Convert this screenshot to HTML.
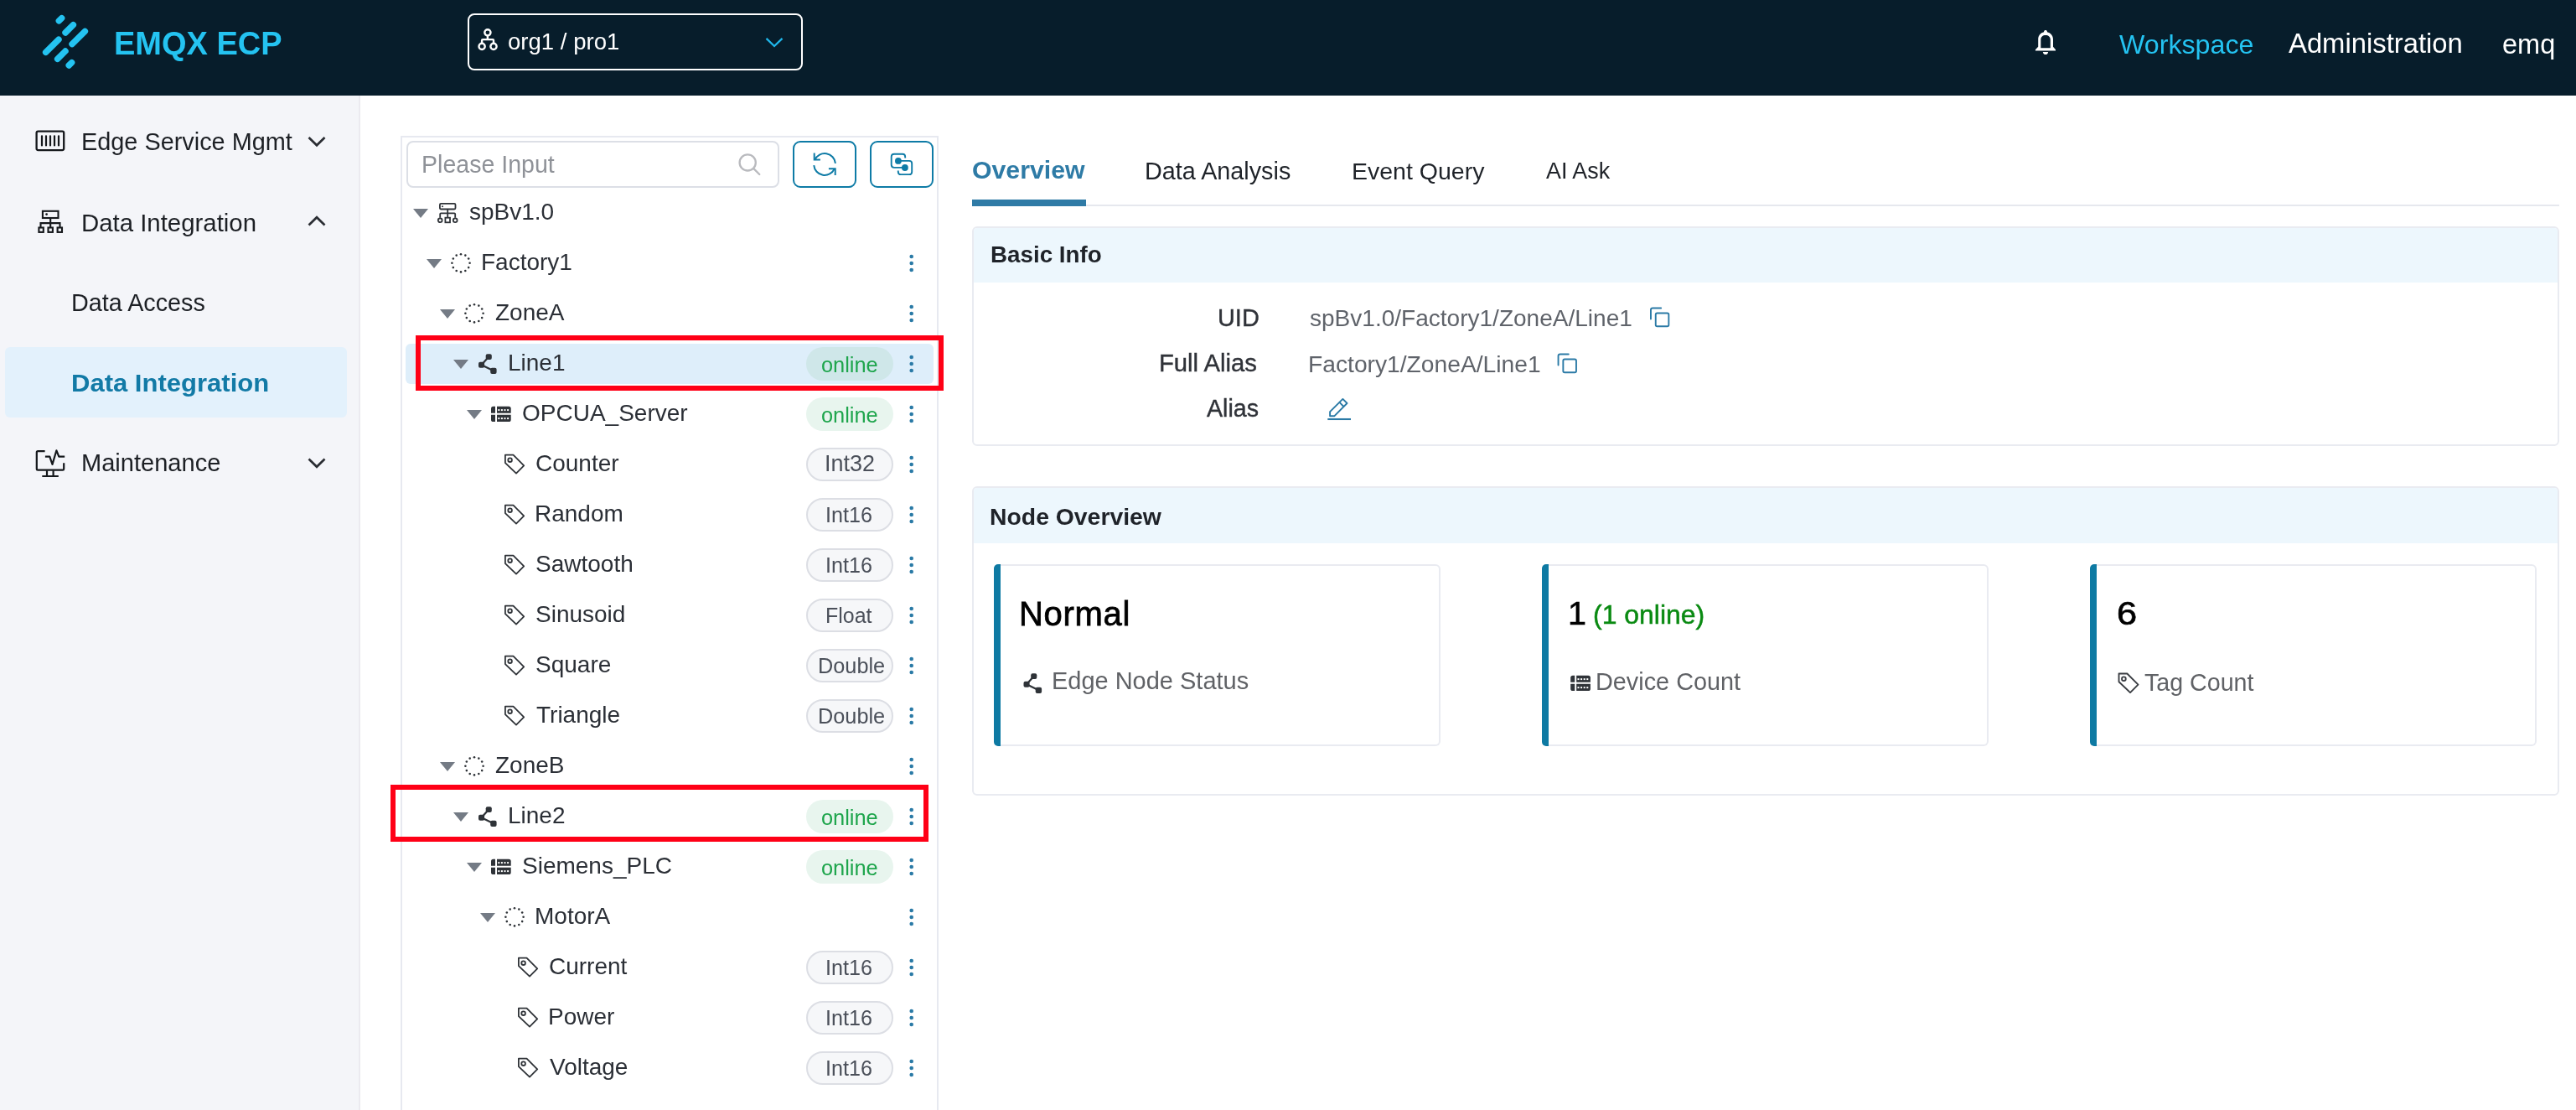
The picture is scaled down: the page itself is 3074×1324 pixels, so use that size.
<!DOCTYPE html>
<html><head><meta charset="utf-8"><title>EMQX ECP</title>
<style>
html,body{margin:0;padding:0;}
body{width:3074px;height:1324px;position:relative;overflow:hidden;background:#fff;font-family:"Liberation Sans", sans-serif;}
.t{position:absolute;line-height:1;white-space:nowrap;will-change:transform;}
.r{position:absolute;}
svg.ov{position:absolute;left:0;top:0;width:3074px;height:1324px;pointer-events:none;}
</style></head><body>
<div class="r" style="left:0px;top:0px;width:3074px;height:114px;background:#071d2b"></div>
<div class="r" style="left:0px;top:114px;width:428px;height:1210px;background:#f4f5f9"></div>
<div class="r" style="left:428px;top:114px;width:2px;height:1210px;background:#ebeaf0"></div>
<div class="t" style="left:136.42px;top:33.03px;font-size:38.0px;color:#24c3f1;font-weight:700;">EMQX ECP</div>
<div class="r" style="left:558px;top:16px;width:400px;height:68px;border:2px solid #fff;border-radius:8px;box-sizing:border-box"></div>
<div class="t" style="left:605.90px;top:36.45px;font-size:27.58px;color:#ffffff;font-weight:400;">org1 / pro1</div>
<div class="t" style="left:2529.00px;top:36.84px;font-size:32.2px;color:#24c3f1;font-weight:400;">Workspace</div>
<div class="t" style="left:2731.00px;top:36.33px;font-size:32.8px;color:#ffffff;font-weight:400;">Administration</div>
<div class="t" style="left:2986.10px;top:36.59px;font-size:32.5px;color:#ffffff;font-weight:400;">emq</div>
<div class="t" style="left:97.19px;top:154.96px;font-size:28.87px;color:#1d2025;font-weight:400;">Edge Service Mgmt</div>
<div class="t" style="left:97.15px;top:250.62px;font-size:29.39px;color:#1d2025;font-weight:400;">Data Integration</div>
<div class="t" style="left:84.70px;top:347.06px;font-size:28.75px;color:#1d2025;font-weight:400;">Data Access</div>
<div class="r" style="left:6px;top:414px;width:408px;height:84px;background:#e3f1fc;border-radius:6px"></div>
<div class="t" style="left:85.14px;top:442.85px;font-size:29px;color:#127aa6;font-weight:700;transform:scaleX(1.0698);transform-origin:0 0;">Data Integration</div>
<div class="t" style="left:97.38px;top:538.40px;font-size:29.06px;color:#1d2025;font-weight:400;">Maintenance</div>
<div class="r" style="left:478px;top:162px;width:642px;height:1200px;border:2px solid #e7e9f0;border-bottom:none;box-sizing:border-box"></div>
<div class="r" style="left:485px;top:168px;width:445px;height:56px;border:2px solid #dcdfe6;border-radius:8px;box-sizing:border-box;background:#fff"></div>
<div class="t" style="left:503.11px;top:181.92px;font-size:28.57px;color:#8f9298;font-weight:400;">Please Input</div>
<div class="r" style="left:946.2px;top:168.2px;width:75.5px;height:55.5px;border:2px solid #0e7ba6;border-radius:9px;box-sizing:border-box"></div>
<div class="r" style="left:1038.2px;top:168.2px;width:75.5px;height:55.5px;border:2px solid #0e7ba6;border-radius:9px;box-sizing:border-box"></div>
<div class="r" style="left:484px;top:410px;width:630px;height:48px;background:#deeefa;border-radius:6px"></div>
<div class="t" style="left:559.64px;top:239.30px;font-size:28px;color:#2b2f36;font-weight:400;">spBv1.0</div>
<div class="t" style="left:573.96px;top:299.30px;font-size:28px;color:#2b2f36;font-weight:400;">Factory1</div>
<div class="t" style="left:591.36px;top:359.30px;font-size:28px;color:#2b2f36;font-weight:400;">ZoneA</div>
<div class="t" style="left:605.96px;top:419.30px;font-size:28px;color:#2b2f36;font-weight:400;">Line1</div>
<div class="r" style="left:962px;top:414px;width:104px;height:40px;background:#cfe7e9;border-radius:20px"></div>
<div class="t" style="left:979.98px;top:422.52px;font-size:25.38px;color:#1ea54c;font-weight:400;">online</div>
<div class="t" style="left:623.08px;top:479.30px;font-size:28px;color:#2b2f36;font-weight:400;">OPCUA_Server</div>
<div class="r" style="left:962px;top:474px;width:104px;height:40px;background:#e8f5ee;border-radius:20px"></div>
<div class="t" style="left:979.98px;top:482.52px;font-size:25.38px;color:#1ea54c;font-weight:400;">online</div>
<div class="t" style="left:638.80px;top:539.30px;font-size:28px;color:#2b2f36;font-weight:400;">Counter</div>
<div class="r" style="left:962px;top:534px;width:104px;height:40px;background:#f6f7f9;border:2px solid #dcdee4;border-radius:20px;box-sizing:border-box"></div>
<div class="t" style="left:983.57px;top:540.18px;font-size:26.96px;color:#4b505a;font-weight:400;">Int32</div>
<div class="t" style="left:637.96px;top:599.30px;font-size:28px;color:#2b2f36;font-weight:400;">Random</div>
<div class="r" style="left:962px;top:594px;width:104px;height:40px;background:#f6f7f9;border:2px solid #dcdee4;border-radius:20px;box-sizing:border-box"></div>
<div class="t" style="left:985.14px;top:601.74px;font-size:25.12px;color:#4b505a;font-weight:400;">Int16</div>
<div class="t" style="left:639.08px;top:659.30px;font-size:28px;color:#2b2f36;font-weight:400;">Sawtooth</div>
<div class="r" style="left:962px;top:654px;width:104px;height:40px;background:#f6f7f9;border:2px solid #dcdee4;border-radius:20px;box-sizing:border-box"></div>
<div class="t" style="left:985.14px;top:661.74px;font-size:25.12px;color:#4b505a;font-weight:400;">Int16</div>
<div class="t" style="left:639.08px;top:719.30px;font-size:28px;color:#2b2f36;font-weight:400;">Sinusoid</div>
<div class="r" style="left:962px;top:714px;width:104px;height:40px;background:#f6f7f9;border:2px solid #dcdee4;border-radius:20px;box-sizing:border-box"></div>
<div class="t" style="left:985.40px;top:721.89px;font-size:24.94px;color:#4b505a;font-weight:400;">Float</div>
<div class="t" style="left:639.08px;top:779.30px;font-size:28px;color:#2b2f36;font-weight:400;">Square</div>
<div class="r" style="left:962px;top:774px;width:104px;height:40px;background:#f6f7f9;border:2px solid #dcdee4;border-radius:20px;box-sizing:border-box"></div>
<div class="t" style="left:976.28px;top:781.59px;font-size:25.29px;color:#4b505a;font-weight:400;">Double</div>
<div class="t" style="left:639.64px;top:839.30px;font-size:28px;color:#2b2f36;font-weight:400;">Triangle</div>
<div class="r" style="left:962px;top:834px;width:104px;height:40px;background:#f6f7f9;border:2px solid #dcdee4;border-radius:20px;box-sizing:border-box"></div>
<div class="t" style="left:976.28px;top:841.59px;font-size:25.29px;color:#4b505a;font-weight:400;">Double</div>
<div class="t" style="left:591.36px;top:899.30px;font-size:28px;color:#2b2f36;font-weight:400;">ZoneB</div>
<div class="t" style="left:605.96px;top:959.30px;font-size:28px;color:#2b2f36;font-weight:400;">Line2</div>
<div class="r" style="left:962px;top:954px;width:104px;height:40px;background:#e8f5ee;border-radius:20px"></div>
<div class="t" style="left:979.98px;top:962.52px;font-size:25.38px;color:#1ea54c;font-weight:400;">online</div>
<div class="t" style="left:623.08px;top:1019.30px;font-size:28px;color:#2b2f36;font-weight:400;">Siemens_PLC</div>
<div class="r" style="left:962px;top:1014px;width:104px;height:40px;background:#e8f5ee;border-radius:20px"></div>
<div class="t" style="left:979.98px;top:1022.52px;font-size:25.38px;color:#1ea54c;font-weight:400;">online</div>
<div class="t" style="left:637.96px;top:1079.30px;font-size:28px;color:#2b2f36;font-weight:400;">MotorA</div>
<div class="t" style="left:654.80px;top:1139.30px;font-size:28px;color:#2b2f36;font-weight:400;">Current</div>
<div class="r" style="left:962px;top:1134px;width:104px;height:40px;background:#f6f7f9;border:2px solid #dcdee4;border-radius:20px;box-sizing:border-box"></div>
<div class="t" style="left:985.14px;top:1141.74px;font-size:25.12px;color:#4b505a;font-weight:400;">Int16</div>
<div class="t" style="left:653.96px;top:1199.30px;font-size:28px;color:#2b2f36;font-weight:400;">Power</div>
<div class="r" style="left:962px;top:1194px;width:104px;height:40px;background:#f6f7f9;border:2px solid #dcdee4;border-radius:20px;box-sizing:border-box"></div>
<div class="t" style="left:985.14px;top:1201.74px;font-size:25.12px;color:#4b505a;font-weight:400;">Int16</div>
<div class="t" style="left:656.20px;top:1259.30px;font-size:28px;color:#2b2f36;font-weight:400;">Voltage</div>
<div class="r" style="left:962px;top:1254px;width:104px;height:40px;background:#f6f7f9;border:2px solid #dcdee4;border-radius:20px;box-sizing:border-box"></div>
<div class="t" style="left:985.14px;top:1261.74px;font-size:25.12px;color:#4b505a;font-weight:400;">Int16</div>
<div class="r" style="left:496px;top:400px;width:630px;height:66px;border:6px solid #ff0016;box-sizing:border-box"></div>
<div class="r" style="left:466px;top:936px;width:642px;height:68px;border:6px solid #ff0016;box-sizing:border-box"></div>
<div class="t" style="left:1159.79px;top:188.39px;font-size:30.25px;color:#2e7ba6;font-weight:700;">Overview</div>
<div class="t" style="left:1365.70px;top:189.65px;font-size:28.77px;color:#1f2329;font-weight:400;">Data Analysis</div>
<div class="t" style="left:1612.52px;top:189.87px;font-size:28.51px;color:#1f2329;font-weight:400;">Event Query</div>
<div class="t" style="left:1845.20px;top:191.29px;font-size:26.83px;color:#1f2329;font-weight:400;">AI Ask</div>
<div class="r" style="left:1160px;top:244px;width:1894px;height:2px;background:#e6e8ee"></div>
<div class="r" style="left:1160px;top:238px;width:136px;height:8px;background:#2f7ba6"></div>
<div class="r" style="left:1160px;top:270px;width:1894px;height:262px;border:2px solid #e9ebf1;border-radius:6px;box-sizing:border-box;overflow:hidden"></div>
<div class="r" style="left:1162px;top:272px;width:1890px;height:65px;background:#edf7fd;border-radius:4px 4px 0 0"></div>
<div class="t" style="left:1181.53px;top:290.48px;font-size:27.79px;color:#1f2329;font-weight:700;">Basic Info</div>
<div class="t" style="left:1452.68px;top:364.85px;font-size:28.88px;color:#303339;font-weight:400;-webkit-text-stroke:0.4px #303339">UID</div>
<div class="t" style="left:1383.46px;top:418.65px;font-size:29.24px;color:#303339;font-weight:400;-webkit-text-stroke:0.4px #303339">Full Alias</div>
<div class="t" style="left:1440.00px;top:473.36px;font-size:28.63px;color:#303339;font-weight:400;-webkit-text-stroke:0.4px #303339">Alias</div>
<div class="t" style="left:1562.84px;top:365.56px;font-size:28.04px;color:#5f636a;font-weight:400;">spBv1.0/Factory1/ZoneA/Line1</div>
<div class="t" style="left:1561.14px;top:419.50px;font-size:28.23px;color:#5f636a;font-weight:400;">Factory1/ZoneA/Line1</div>
<div class="r" style="left:1160px;top:580px;width:1894px;height:369px;border:2px solid #e9ebf1;border-radius:6px;box-sizing:border-box"></div>
<div class="r" style="left:1162px;top:582px;width:1890px;height:66px;background:#edf7fd;border-radius:4px 4px 0 0"></div>
<div class="t" style="left:1181.30px;top:601.78px;font-size:28.37px;color:#1f2329;font-weight:700;">Node Overview</div>
<div class="r" style="left:1186px;top:673px;width:533px;height:217px;border:2px solid #e9ebf1;border-left:none;border-radius:6px;box-sizing:border-box;background:#fff"></div>
<div class="r" style="left:1186px;top:673px;width:8px;height:217px;background:#0e7aa3;border-radius:5px 0 0 5px"></div>
<div class="r" style="left:1840px;top:673px;width:533px;height:217px;border:2px solid #e9ebf1;border-left:none;border-radius:6px;box-sizing:border-box;background:#fff"></div>
<div class="r" style="left:1840px;top:673px;width:8px;height:217px;background:#0e7aa3;border-radius:5px 0 0 5px"></div>
<div class="r" style="left:2494px;top:673px;width:533px;height:217px;border:2px solid #e9ebf1;border-left:none;border-radius:6px;box-sizing:border-box;background:#fff"></div>
<div class="r" style="left:2494px;top:673px;width:8px;height:217px;background:#0e7aa3;border-radius:5px 0 0 5px"></div>
<div class="t" style="left:1216.20px;top:711.74px;font-size:40px;color:#000000;font-weight:400;-webkit-text-stroke:0.8px #000;letter-spacing:0.7px">Normal</div>
<div class="t" style="left:1255.38px;top:797.77px;font-size:28.98px;color:#606266;font-weight:400;">Edge Node Status</div>
<div class="t" style="left:1870.63px;top:711.76px;font-size:39.5px;color:#000000;font-weight:400;-webkit-text-stroke:0.6px #000">1</div>
<div class="t" style="left:1901.08px;top:718.15px;font-size:31.95px;color:#0a8a12;font-weight:400;-webkit-text-stroke:0.5px #0a8a12">(1 online)</div>
<div class="t" style="left:1903.69px;top:799.40px;font-size:28.83px;color:#606266;font-weight:400;">Device Count</div>
<div class="t" style="left:2525.62px;top:711.56px;font-size:39.5px;color:#000000;font-weight:400;-webkit-text-stroke:0.7px #000;transform:scaleX(1.1);transform-origin:left">6</div>
<div class="t" style="left:2558.63px;top:799.76px;font-size:28.63px;color:#606266;font-weight:400;">Tag Count</div>
<svg class="ov" width="3074" height="1324" viewBox="0 0 3074 1324">
<line x1="70.35" y1="24.95" x2="73.65" y2="21.65" stroke="#24c3f1" stroke-width="7.4" stroke-linecap="round"/>
<line x1="78" y1="39" x2="87.4" y2="29.7" stroke="#24c3f1" stroke-width="7.4" stroke-linecap="round"/>
<line x1="86" y1="52.6" x2="101.4" y2="37.3" stroke="#24c3f1" stroke-width="7.4" stroke-linecap="round"/>
<line x1="54.6" y1="62.4" x2="70" y2="47.1" stroke="#24c3f1" stroke-width="7.4" stroke-linecap="round"/>
<line x1="68.6" y1="70.4" x2="78" y2="61" stroke="#24c3f1" stroke-width="7.4" stroke-linecap="round"/>
<line x1="82.2" y1="78" x2="85.6" y2="74.7" stroke="#24c3f1" stroke-width="7.4" stroke-linecap="round"/>
<g fill="none" stroke="#fff" stroke-width="2.4"><circle cx="581.9" cy="38.8" r="3.6"/><circle cx="575.1" cy="55.4" r="3.6"/><circle cx="589" cy="55.4" r="3.6"/><path d="M581.9 42.4V47.1M575.1 51.8V48.1Q575.1 47.1 576.1 47.1H588Q589 47.1 589 48.1V51.8"/></g>
<polyline points="914.5,45.8 924,55 933.5,45.8" fill="none" stroke="#1fb6ea" stroke-width="2.3"/>
<path fill="#fff" fill-rule="evenodd" d="M2428.9 60.6V59.2L2432.2 55.8V47C2432.2 42.3 2435 39.3 2439.1 38.3V37.6C2439.1 36.6 2440 35.9 2441 35.9S2442.9 36.6 2442.9 37.6V38.3C2447 39.3 2450 42.3 2450 47V55.8L2453 59.2V60.6ZM2435.3 57.3H2446.8V47.2C2446.8 43.9 2444.4 41.9 2441 41.9S2435.3 43.9 2435.3 47.2Z"/>
<path fill="#fff" d="M2437.8 62H2444.1C2444 63.9 2442.7 65.1 2441 65.1S2438 63.9 2437.8 62Z"/>
<g fill="none" stroke="#15181c" stroke-width="2.3"><rect x="43.6" y="156.6" width="32.6" height="22.5" rx="2"/><path d="M50 162.3V173.4M55 162.3V173.4M60 162.3V173.4M65 162.3V173.4M70 162.3V173.4" stroke-linecap="round" stroke-width="2.2"/></g>
<polyline points="368.5,164 378,173.3 387.5,164" fill="none" stroke="#2a2d33" stroke-width="2.7"/>
<g fill="none" stroke="#15181c" stroke-width="2.1"><rect x="50.9" y="251.8" width="18.6" height="8.2"/><path d="M60.2 260V266.1M48.5 271V266.1H71.5V271M60.2 266.1V271"/><rect x="46.4" y="271.5" width="5.4" height="5.4"/><rect x="57.5" y="271.5" width="5.4" height="5.4"/><rect x="68.6" y="271.5" width="5.4" height="5.4"/></g><circle cx="55.6" cy="255.6" r="1.4" fill="#15181c"/>
<polyline points="368.5,268.5 378,259.2 387.5,268.5" fill="none" stroke="#2a2d33" stroke-width="2.7"/>
<g fill="none" stroke="#15181c" stroke-width="2.2" stroke-linejoin="round"><path d="M53.6 538.1H45.2Q43.8 538.1 43.8 539.5V559.3Q43.8 560.7 45.2 560.7H74.9Q76.2 560.7 76.2 559.3V552.2"/><path d="M53.9 544.6H59.3L62.5 553.9L67.4 537.3L70.3 544.6H77.2"/><path d="M56 561.3V567.8M63.6 561.3V567.8M50.3 568H69.8"/></g>
<polyline points="368.5,547.5 378,556.8 387.5,547.5" fill="none" stroke="#2a2d33" stroke-width="2.7"/>
<g fill="none" stroke="#b9babe" stroke-width="2.3" stroke-linecap="round"><circle cx="892.2" cy="193.9" r="9.6"/><path d="M899.4 201.1L906.3 208"/></g>
<g fill="none" stroke="#0e7ba6" stroke-width="2"><path d="M972.3 190.75A12.9 12.9 0 0 1 996.95 194.9"/><path d="M971.25 197.1A12.9 12.9 0 0 0 995.8 201.45"/><path d="M971.7 182.6V190.4H978.9M988.9 201.2H996.7V209"/></g>
<g fill="none" stroke="#0e7ba6" stroke-width="1.9"><path d="M1080.2 188.6V187Q1080.2 183.7 1077 183.7H1067Q1063.7 183.7 1063.7 187V196.6Q1063.7 199.9 1067 199.9H1079.9"/><path d="M1071.9 191.9H1085Q1088.2 191.9 1088.2 195.1V204.9Q1088.2 208.1 1085 208.1H1075Q1071.8 208.1 1071.8 204.9V203.6"/></g><circle cx="1071.9" cy="191.9" r="3.9" fill="#0e7ba6"/><circle cx="1079.9" cy="200" r="3.9" fill="#0e7ba6"/>
<polygon points="493,249 511,249 502,260" fill="#747b85"/>
<g transform="translate(522,242)" fill="none" stroke="#2f3338" stroke-width="1.8"><rect x="2.9" y="0.9" width="18.6" height="6.6" rx="1.4"/><path d="M12.2 7.5V17.3M3.2 17.7V13.4Q3.2 12.4 4.2 12.4H20.2Q21.2 12.4 21.2 13.4V17.7"/><circle cx="3.2" cy="20.8" r="2.4"/><circle cx="21.2" cy="20.8" r="2.4"/><rect x="9.4" y="17.7" width="5.6" height="5.6"/></g><circle cx="528" cy="246.2" r="1" fill="#2f3338"/>
<polygon points="509,309 527,309 518,320" fill="#747b85"/>
<g fill="#2f3338"><circle cx="560.60" cy="313.80" r="1.3"/><circle cx="559.18" cy="319.10" r="1.3"/><circle cx="555.30" cy="322.98" r="1.3"/><circle cx="550.00" cy="324.40" r="1.3"/><circle cx="544.70" cy="322.98" r="1.3"/><circle cx="540.82" cy="319.10" r="1.3"/><circle cx="539.40" cy="313.80" r="1.3"/><circle cx="540.82" cy="308.50" r="1.3"/><circle cx="544.70" cy="304.62" r="1.3"/><circle cx="550.00" cy="303.20" r="1.3"/><circle cx="555.30" cy="304.62" r="1.3"/><circle cx="559.18" cy="308.50" r="1.3"/></g>
<g fill="#2a7aa6"><circle cx="1087.7" cy="306" r="2.3"/><circle cx="1087.7" cy="314" r="2.3"/><circle cx="1087.7" cy="322" r="2.3"/></g>
<polygon points="525,369 543,369 534,380" fill="#747b85"/>
<g fill="#2f3338"><circle cx="576.60" cy="373.80" r="1.3"/><circle cx="575.18" cy="379.10" r="1.3"/><circle cx="571.30" cy="382.98" r="1.3"/><circle cx="566.00" cy="384.40" r="1.3"/><circle cx="560.70" cy="382.98" r="1.3"/><circle cx="556.82" cy="379.10" r="1.3"/><circle cx="555.40" cy="373.80" r="1.3"/><circle cx="556.82" cy="368.50" r="1.3"/><circle cx="560.70" cy="364.62" r="1.3"/><circle cx="566.00" cy="363.20" r="1.3"/><circle cx="571.30" cy="364.62" r="1.3"/><circle cx="575.18" cy="368.50" r="1.3"/></g>
<g fill="#2a7aa6"><circle cx="1087.7" cy="366" r="2.3"/><circle cx="1087.7" cy="374" r="2.3"/><circle cx="1087.7" cy="382" r="2.3"/></g>
<polygon points="541,429 559,429 550,440" fill="#747b85"/>
<g transform="translate(570.8,422) scale(1.0)" fill="#2f3338" stroke="#2f3338"><path d="M3.75 13.2L12.45 3.55M3.75 13.2L18.15 20.25" stroke-width="2.3" fill="none"/><rect x="8.9" y="0.2" width="7.1" height="6.9" rx="2" stroke="none"/><rect x="0.2" y="9.8" width="7.1" height="6.9" rx="2" stroke="none"/><rect x="14.4" y="16.7" width="7.4" height="7.2" rx="2" stroke="none"/></g>
<g fill="#2a7aa6"><circle cx="1087.7" cy="426" r="2.3"/><circle cx="1087.7" cy="434" r="2.3"/><circle cx="1087.7" cy="442" r="2.3"/></g>
<polygon points="557,489 575,489 566,500" fill="#747b85"/>
<g transform="translate(586,484.7) scale(1.0)"><g fill="#2f3338"><path d="M2.6 0H5V8.1H0V2.6Q0 0 2.6 0Z"/><path d="M0 10.1H5V18.3H2.6Q0 18.3 0 15.7Z"/><path d="M7 0H21.1Q23.7 0 23.7 2.6V8.1H7Z"/><path d="M7 10.1H23.7V15.7Q23.7 18.3 21.1 18.3H7Z"/></g><g fill="#fff"><rect x="8.3" y="3.4" width="2" height="2"/><rect x="11.9" y="3.4" width="2" height="2"/><rect x="15.5" y="3.4" width="2" height="2"/><rect x="19.1" y="3.4" width="2" height="2"/><rect x="8.3" y="13.4" width="2" height="2"/><rect x="11.9" y="13.4" width="2" height="2"/><rect x="15.5" y="13.4" width="2" height="2"/><rect x="19.1" y="13.4" width="2" height="2"/></g></g>
<g fill="#2a7aa6"><circle cx="1087.7" cy="486" r="2.3"/><circle cx="1087.7" cy="494" r="2.3"/><circle cx="1087.7" cy="502" r="2.3"/></g>
<g transform="translate(602,541.8) scale(1.0)" fill="none" stroke="#2f3338" stroke-width="1.8" stroke-linejoin="round"><path d="M0.9 0.9H10.5L23.2 13.6L14 22.8L0.9 10.3Z"/><circle cx="6.6" cy="6.9" r="2.3"/></g>
<g fill="#2a7aa6"><circle cx="1087.7" cy="546" r="2.3"/><circle cx="1087.7" cy="554" r="2.3"/><circle cx="1087.7" cy="562" r="2.3"/></g>
<g transform="translate(602,601.8) scale(1.0)" fill="none" stroke="#2f3338" stroke-width="1.8" stroke-linejoin="round"><path d="M0.9 0.9H10.5L23.2 13.6L14 22.8L0.9 10.3Z"/><circle cx="6.6" cy="6.9" r="2.3"/></g>
<g fill="#2a7aa6"><circle cx="1087.7" cy="606" r="2.3"/><circle cx="1087.7" cy="614" r="2.3"/><circle cx="1087.7" cy="622" r="2.3"/></g>
<g transform="translate(602,661.8) scale(1.0)" fill="none" stroke="#2f3338" stroke-width="1.8" stroke-linejoin="round"><path d="M0.9 0.9H10.5L23.2 13.6L14 22.8L0.9 10.3Z"/><circle cx="6.6" cy="6.9" r="2.3"/></g>
<g fill="#2a7aa6"><circle cx="1087.7" cy="666" r="2.3"/><circle cx="1087.7" cy="674" r="2.3"/><circle cx="1087.7" cy="682" r="2.3"/></g>
<g transform="translate(602,721.8) scale(1.0)" fill="none" stroke="#2f3338" stroke-width="1.8" stroke-linejoin="round"><path d="M0.9 0.9H10.5L23.2 13.6L14 22.8L0.9 10.3Z"/><circle cx="6.6" cy="6.9" r="2.3"/></g>
<g fill="#2a7aa6"><circle cx="1087.7" cy="726" r="2.3"/><circle cx="1087.7" cy="734" r="2.3"/><circle cx="1087.7" cy="742" r="2.3"/></g>
<g transform="translate(602,781.8) scale(1.0)" fill="none" stroke="#2f3338" stroke-width="1.8" stroke-linejoin="round"><path d="M0.9 0.9H10.5L23.2 13.6L14 22.8L0.9 10.3Z"/><circle cx="6.6" cy="6.9" r="2.3"/></g>
<g fill="#2a7aa6"><circle cx="1087.7" cy="786" r="2.3"/><circle cx="1087.7" cy="794" r="2.3"/><circle cx="1087.7" cy="802" r="2.3"/></g>
<g transform="translate(602,841.8) scale(1.0)" fill="none" stroke="#2f3338" stroke-width="1.8" stroke-linejoin="round"><path d="M0.9 0.9H10.5L23.2 13.6L14 22.8L0.9 10.3Z"/><circle cx="6.6" cy="6.9" r="2.3"/></g>
<g fill="#2a7aa6"><circle cx="1087.7" cy="846" r="2.3"/><circle cx="1087.7" cy="854" r="2.3"/><circle cx="1087.7" cy="862" r="2.3"/></g>
<polygon points="525,909 543,909 534,920" fill="#747b85"/>
<g fill="#2f3338"><circle cx="576.60" cy="913.80" r="1.3"/><circle cx="575.18" cy="919.10" r="1.3"/><circle cx="571.30" cy="922.98" r="1.3"/><circle cx="566.00" cy="924.40" r="1.3"/><circle cx="560.70" cy="922.98" r="1.3"/><circle cx="556.82" cy="919.10" r="1.3"/><circle cx="555.40" cy="913.80" r="1.3"/><circle cx="556.82" cy="908.50" r="1.3"/><circle cx="560.70" cy="904.62" r="1.3"/><circle cx="566.00" cy="903.20" r="1.3"/><circle cx="571.30" cy="904.62" r="1.3"/><circle cx="575.18" cy="908.50" r="1.3"/></g>
<g fill="#2a7aa6"><circle cx="1087.7" cy="906" r="2.3"/><circle cx="1087.7" cy="914" r="2.3"/><circle cx="1087.7" cy="922" r="2.3"/></g>
<polygon points="541,969 559,969 550,980" fill="#747b85"/>
<g transform="translate(570.8,962) scale(1.0)" fill="#2f3338" stroke="#2f3338"><path d="M3.75 13.2L12.45 3.55M3.75 13.2L18.15 20.25" stroke-width="2.3" fill="none"/><rect x="8.9" y="0.2" width="7.1" height="6.9" rx="2" stroke="none"/><rect x="0.2" y="9.8" width="7.1" height="6.9" rx="2" stroke="none"/><rect x="14.4" y="16.7" width="7.4" height="7.2" rx="2" stroke="none"/></g>
<g fill="#2a7aa6"><circle cx="1087.7" cy="966" r="2.3"/><circle cx="1087.7" cy="974" r="2.3"/><circle cx="1087.7" cy="982" r="2.3"/></g>
<polygon points="557,1029 575,1029 566,1040" fill="#747b85"/>
<g transform="translate(586,1024.7) scale(1.0)"><g fill="#2f3338"><path d="M2.6 0H5V8.1H0V2.6Q0 0 2.6 0Z"/><path d="M0 10.1H5V18.3H2.6Q0 18.3 0 15.7Z"/><path d="M7 0H21.1Q23.7 0 23.7 2.6V8.1H7Z"/><path d="M7 10.1H23.7V15.7Q23.7 18.3 21.1 18.3H7Z"/></g><g fill="#fff"><rect x="8.3" y="3.4" width="2" height="2"/><rect x="11.9" y="3.4" width="2" height="2"/><rect x="15.5" y="3.4" width="2" height="2"/><rect x="19.1" y="3.4" width="2" height="2"/><rect x="8.3" y="13.4" width="2" height="2"/><rect x="11.9" y="13.4" width="2" height="2"/><rect x="15.5" y="13.4" width="2" height="2"/><rect x="19.1" y="13.4" width="2" height="2"/></g></g>
<g fill="#2a7aa6"><circle cx="1087.7" cy="1026" r="2.3"/><circle cx="1087.7" cy="1034" r="2.3"/><circle cx="1087.7" cy="1042" r="2.3"/></g>
<polygon points="573,1089 591,1089 582,1100" fill="#747b85"/>
<g fill="#2f3338"><circle cx="624.60" cy="1093.80" r="1.3"/><circle cx="623.18" cy="1099.10" r="1.3"/><circle cx="619.30" cy="1102.98" r="1.3"/><circle cx="614.00" cy="1104.40" r="1.3"/><circle cx="608.70" cy="1102.98" r="1.3"/><circle cx="604.82" cy="1099.10" r="1.3"/><circle cx="603.40" cy="1093.80" r="1.3"/><circle cx="604.82" cy="1088.50" r="1.3"/><circle cx="608.70" cy="1084.62" r="1.3"/><circle cx="614.00" cy="1083.20" r="1.3"/><circle cx="619.30" cy="1084.62" r="1.3"/><circle cx="623.18" cy="1088.50" r="1.3"/></g>
<g fill="#2a7aa6"><circle cx="1087.7" cy="1086" r="2.3"/><circle cx="1087.7" cy="1094" r="2.3"/><circle cx="1087.7" cy="1102" r="2.3"/></g>
<g transform="translate(618,1141.8) scale(1.0)" fill="none" stroke="#2f3338" stroke-width="1.8" stroke-linejoin="round"><path d="M0.9 0.9H10.5L23.2 13.6L14 22.8L0.9 10.3Z"/><circle cx="6.6" cy="6.9" r="2.3"/></g>
<g fill="#2a7aa6"><circle cx="1087.7" cy="1146" r="2.3"/><circle cx="1087.7" cy="1154" r="2.3"/><circle cx="1087.7" cy="1162" r="2.3"/></g>
<g transform="translate(618,1201.8) scale(1.0)" fill="none" stroke="#2f3338" stroke-width="1.8" stroke-linejoin="round"><path d="M0.9 0.9H10.5L23.2 13.6L14 22.8L0.9 10.3Z"/><circle cx="6.6" cy="6.9" r="2.3"/></g>
<g fill="#2a7aa6"><circle cx="1087.7" cy="1206" r="2.3"/><circle cx="1087.7" cy="1214" r="2.3"/><circle cx="1087.7" cy="1222" r="2.3"/></g>
<g transform="translate(618,1261.8) scale(1.0)" fill="none" stroke="#2f3338" stroke-width="1.8" stroke-linejoin="round"><path d="M0.9 0.9H10.5L23.2 13.6L14 22.8L0.9 10.3Z"/><circle cx="6.6" cy="6.9" r="2.3"/></g>
<g fill="#2a7aa6"><circle cx="1087.7" cy="1266" r="2.3"/><circle cx="1087.7" cy="1274" r="2.3"/><circle cx="1087.7" cy="1282" r="2.3"/></g>
<g transform="translate(1969,367)" fill="none" stroke="#2b7aa6" stroke-width="1.9"><path d="M0.95 13.5V2.6Q0.95 0.45 3.1 0.45H13.2" stroke-linecap="round"/><rect x="6.75" y="6.5" width="15.6" height="15.8" rx="1.8"/></g>
<g transform="translate(1858.6,422)" fill="none" stroke="#2b7aa6" stroke-width="1.9"><path d="M0.95 13.5V2.6Q0.95 0.45 3.1 0.45H13.2" stroke-linecap="round"/><rect x="6.75" y="6.5" width="15.6" height="15.8" rx="1.8"/></g>
<g fill="none" stroke="#2b7aa6" stroke-width="1.9"><path d="M1587.1 491.2L1602.4 475.9L1607.5 481L1592.2 496.3H1587.1Z" stroke-linejoin="round"/><path d="M1598.4 479.9L1603.5 485"/><path d="M1584.3 500H1612" stroke-width="2.1"/></g>
<g transform="translate(1221.3,803) scale(1.0)" fill="#2f3338" stroke="#2f3338"><path d="M3.75 13.2L12.45 3.55M3.75 13.2L18.15 20.25" stroke-width="2.3" fill="none"/><rect x="8.9" y="0.2" width="7.1" height="6.9" rx="2" stroke="none"/><rect x="0.2" y="9.8" width="7.1" height="6.9" rx="2" stroke="none"/><rect x="14.4" y="16.7" width="7.4" height="7.2" rx="2" stroke="none"/></g>
<g transform="translate(1874.2,805.7) scale(1.0)"><g fill="#2f3338"><path d="M2.6 0H5V8.1H0V2.6Q0 0 2.6 0Z"/><path d="M0 10.1H5V18.3H2.6Q0 18.3 0 15.7Z"/><path d="M7 0H21.1Q23.7 0 23.7 2.6V8.1H7Z"/><path d="M7 10.1H23.7V15.7Q23.7 18.3 21.1 18.3H7Z"/></g><g fill="#fff"><rect x="8.3" y="3.4" width="2" height="2"/><rect x="11.9" y="3.4" width="2" height="2"/><rect x="15.5" y="3.4" width="2" height="2"/><rect x="19.1" y="3.4" width="2" height="2"/><rect x="8.3" y="13.4" width="2" height="2"/><rect x="11.9" y="13.4" width="2" height="2"/><rect x="15.5" y="13.4" width="2" height="2"/><rect x="19.1" y="13.4" width="2" height="2"/></g></g>
<g transform="translate(2527.6,802.6) scale(1.03)" fill="none" stroke="#3a3d42" stroke-width="1.8" stroke-linejoin="round"><path d="M0.9 0.9H10.5L23.2 13.6L14 22.8L0.9 10.3Z"/><circle cx="6.6" cy="6.9" r="2.3"/></g>
</svg>
</body></html>
